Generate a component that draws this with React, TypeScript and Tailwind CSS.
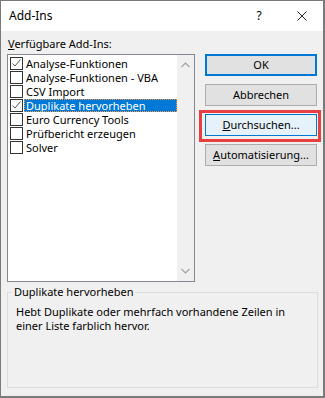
import React from "react";

const items = [
  { label: "Analyse-Funktionen", checked: true },
  { label: "Analyse-Funktionen - VBA", checked: false },
  { label: "CSV Import", checked: false },
  { label: "Duplikate hervorheben", checked: true, selected: true },
  { label: "Euro Currency Tools", checked: false },
  { label: "Prüfbericht erzeugen", checked: false },
  { label: "Solver", checked: false },
];

function Check({ checked }: { checked: boolean }) {
  return (
    <div className="w-[13px] h-[13px] border border-[#333333] bg-white shrink-0 flex items-center justify-center">
      {checked && (
        <svg width="11" height="11" viewBox="0 0 11 11">
          <polyline points="1.5,5.5 4,8 9.5,1.5" fill="none" stroke="#555555" strokeWidth="1" />
        </svg>
      )}
    </div>
  );
}

function Btn({ children, variant }: { children: React.ReactNode; variant?: "default" | "hover" }) {
  const cls =
    variant === "default"
      ? "border-2 border-[#0078d7] bg-[#e1e1e1]"
      : variant === "hover"
      ? "border border-[#0078d7] bg-[#e5f1fb]"
      : "border border-[#adadad] bg-[#e1e1e1]";
  return (
    <div className={`w-[112px] h-[22px] flex items-center justify-center text-[11px] text-black leading-[14px] ${cls}`}>
      {children}
    </div>
  );
}

export default function App() {
  return (
    <div
      className="relative w-[325px] h-[398px] flex flex-col bg-[#f0f0f0] border-l border-t border-r-2 border-b-2 border-[#7a7a7a] text-black"
      style={{ fontFamily: '"Noto Sans", "Open Sans", sans-serif' }}
    >
      {/* Title bar */}
      <div className="h-[30px] bg-white flex items-center pl-[8px] shrink-0">
        <span className="text-[12px]">Add-Ins</span>
        <div className="flex-1" />
        <span className="text-[12px] w-[14px] text-center mr-[31px]">?</span>
        <svg width="10" height="10" viewBox="0 0 10 10" className="mr-[16px]">
          <path d="M0.5 0.5 L9.5 9.5 M9.5 0.5 L0.5 9.5" stroke="#222" strokeWidth="1" />
        </svg>
      </div>

      {/* Body */}
      <div className="flex pl-[6px]">
        <div className="flex flex-col w-[188px]">
          <div className="pt-[6px] h-[20px] text-[11px] leading-[14px] pl-[1px]">
            <span className="underline">V</span>erfügbare Add-Ins:
          </div>
          <div className="mt-[3px] h-[228px] border border-[#828790] bg-white flex">
            <div className="flex-1 flex flex-col pt-[1px] pl-[2px]">
              {items.map((it) => (
                <div key={it.label} className="h-[14px] flex items-center">
                  <Check checked={it.checked} />
                  <div
                    className={`ml-[1px] h-[13px] flex items-center pl-[2px] text-[11px] leading-[13px] whitespace-nowrap ${
                      it.selected ? "bg-[#0078d7] text-white outline outline-1 outline-dotted outline-[#ff9a3c] -outline-offset-1 w-[153px]" : ""
                    }`}
                  >
                    {it.label}
                  </div>
                </div>
              ))}
            </div>
            <div className="w-[17px] bg-[#f0f0f0] flex flex-col items-center justify-between py-[7px]">
              <svg width="9" height="6" viewBox="0 0 9 6">
                <polyline points="0.5,5 4.5,1 8.5,5" fill="none" stroke="#a3a3a3" strokeWidth="1.2" />
              </svg>
              <svg width="9" height="6" viewBox="0 0 9 6">
                <polyline points="0.5,1 4.5,5 8.5,1" fill="none" stroke="#a3a3a3" strokeWidth="1.2" />
              </svg>
            </div>
          </div>
        </div>
        <div className="ml-[10px] pt-[23px] flex flex-col gap-[8px]">
          <Btn variant="default">OK</Btn>
          <Btn>Abbrechen</Btn>
          <Btn variant="hover">
            <span>
              <span className="underline">D</span>urchsuchen...
            </span>
          </Btn>
          <Btn>
            <span>
              <span className="underline">A</span>utomatisierung...
            </span>
          </Btn>
        </div>
      </div>

      {/* Group box */}
      <div className="ml-[6px] mt-[10px] w-[311px] h-[96px] border border-[#dcdcdc] relative">
        <div className="absolute -top-[8px] left-[4px] px-[2px] bg-[#f0f0f0] text-[11px] leading-[14px]">
          Duplikate hervorheben
        </div>
        <div className="pt-[12px] pl-[8px] text-[11px] leading-[14px]">
          Hebt Duplikate oder mehrfach vorhandene Zeilen in
          <br />
          einer Liste farblich hervor.
        </div>
      </div>

      {/* Highlight box overlay */}
      <div className="absolute left-[198px] top-[109px] w-[122px] h-[32px] border-[3px] border-[#e84040] pointer-events-none" />
    </div>
  );
}
